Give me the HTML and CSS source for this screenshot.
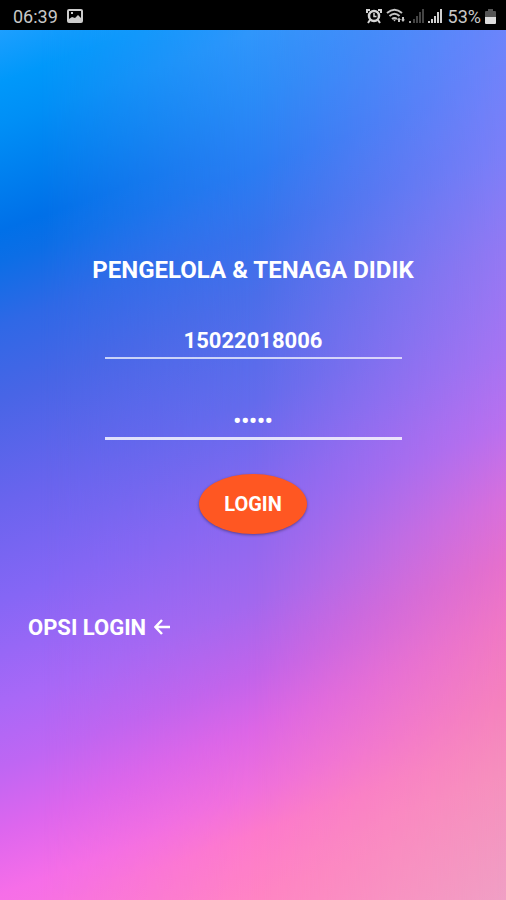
FILE: index.html
```html
<!DOCTYPE html>
<html lang="id">
<head>
<meta charset="utf-8">
<meta name="viewport" content="width=device-width, initial-scale=1">
<title>Login</title>
<link rel="stylesheet" href="styles.css">
</head>
<body>
<header class="statusbar">
	<span>06:39</span>
	<svg class="photo" width="16" height="14" viewBox="0 0 16 14"><path fill="#ccc" fill-rule="evenodd" d="M2 0h12a2 2 0 0 1 2 2v10a2 2 0 0 1-2 2H2a2 2 0 0 1-2-2V2a2 2 0 0 1 2-2zM2 2v8l3-2 3 1 3-3 3 3V2zM4 3h2v2H4z"/></svg>
	<div class="icons">
		<svg width="16" height="16" viewBox="0 0 16 16" fill="none" stroke="#d4d4d4" stroke-width="2.5"><circle cx="8" cy="8" r="5"/><path stroke-width="2" d="M1 5V2h3M15 5V2h-3M4 12l-2 3M12 12l2 3"/><path stroke-width="1.5" d="M8 5v3.500h2.500"/></svg>
		<svg width="19" height="16" viewBox="0 0 19 16" fill="none" stroke="#c4c4c4" stroke-width="2"><path d="M1 5q7.500-6.500 15 0M3.500 8q5-4.500 10 0M6 11q2.500-2 5 0"/><path fill="#c4c4c4" stroke="none" d="M7 11.500h3l-1.500 2zM13 9.500l2 2.500h-1v2h-2v-2h-1zM16 9h2v2.500h1L17 14l-2-2.500h1z"/></svg>
		<svg width="15" height="14" viewBox="0 0 15 14" fill="#444"><path fill="#999" d="M0 12h2v2H0z"/><path d="M4 10h2v4H4zM7 7h2v7H7zM10 3h2v11h-2zM13 0h2v14h-2z"/></svg>
		<svg width="14" height="14" viewBox="0 0 14 14" fill="#d0d0d0"><path d="M0 12h2v2H0zM3 10h2v4H3zM6 7h2v7H6zM9 3h2v11H9zM12 0h2v14h-2z"/></svg>
		<span class="percent">53%</span>
		<svg width="11" height="15" viewBox="0 0 11 15"><path fill="#555" d="M3 0h5v2h2a1 1 0 0 1 1 1v5H0V3a1 1 0 0 1 1-1h2z"/><path fill="#ddd" d="M0 8h11v6a1 1 0 0 1-1 1H1a1 1 0 0 1-1-1z"/></svg>
	</div>
</header>
<main class="screen">
	<form class="login" onsubmit="return false">
		<h1 class="title">PENGELOLA &amp; TENAGA DIDIK</h1>
		<input class="field" type="text" value="15022018006" aria-label="Username">
		<input class="field focused" type="password" value="12345" aria-label="Password">
		<button class="submit" type="submit">LOGIN</button>
	</form>
	<a class="back" href="#">OPSI LOGIN
		<svg width="16" height="20" viewBox="0 0 16 20" fill="none" stroke="#fff" stroke-width="2.5"><path d="M16 9H2M8 2L1.500 9L8 16"/></svg>
	</a>
</main>
</body>
</html>
```

FILE: styles.css
```css
* { box-sizing:border-box; }
body { margin:0; min-height:100vh; display:flex; flex-direction:column; background:#000; font-family:Roboto, sans-serif; color:#fff; }

.statusbar { display:flex; align-items:center; height:30px; padding:2px 10px 0 13px; font-size:18px; color:#c8c8c8; }
.photo { margin-left:9px; }
.icons { display:flex; align-items:center; gap:4px; margin-left:auto; }
.percent { margin-left:2px; }

/* three tilted ramps (left, middle, right) faded into each other */
.screen { position:relative; z-index:0; flex:1; padding:224px 28px 40px;
	background:linear-gradient(160deg, #1d9fff 0%, #0098fa 5%, #008ff6 9%, #0070e8 19%, #0c6ee6 22%, #2f68e6 28%, #4865e6 35%, #6a64ee 45%, #8566f5 54%, #a968f7 64%, #bf66f3 70%, #dd66ee 76%, #f66ee8 82%, #ff88c4 100%); }
.screen:before, .screen:after { content:""; position:absolute; z-index:-1; inset:0; }
.screen:before {
	background:linear-gradient(160deg, #1d9cff 0%, #3096fb 9%, #2a8cf7 15%, #2a7cf2 22%, #3872ec 28%, #4a6ee9 34%, #636bec 44%, #8568f0 53%, #a268ee 63%, #c264ea 70%, #dc66e6 75%, #f070dc 81%, #fd7acc 85%, #ff84c4 91%, #ff90c0 100%);
	mask-image:linear-gradient(to right, transparent 8%, #000 50%); }
.screen:after {
	background:linear-gradient(160deg, #4a90fa 0%, #6b85fb 17%, #7c7ff8 29%, #9379f3 38%, #a674f2 48%, #ba70ee 55%, #d86fdc 62%, #e670cc 68%, #f078c4 74%, #f582bd 81%, #f690bd 88%, #f09fc4 100%);
	mask-image:linear-gradient(to right, transparent 50%, #000); }

.login { display:flex; flex-direction:column; align-items:center; }
.title { margin:0; font-size:24px; line-height:32px; font-weight:bold; text-align:center; }
.field { width:66%; height:44px; margin-top:29px; padding:8px 0 0; border:0; border-bottom:2px solid rgba(255,255,255,.7); border-radius:0; outline:0; background:none; color:#fff; font:bold 22px Roboto, sans-serif; text-align:center; }
.focused { height:48px; margin-top:33px; padding-top:12px; border-bottom:3px solid rgba(255,255,255,.8); }
.submit { width:108px; height:60px; margin-top:34px; padding:0; border:0; border-radius:50%; background:#ff5722; color:#fff; font:bold 20px Roboto, sans-serif; box-shadow:0 1px 3px rgba(0,0,0,.4); }

.back { display:inline-flex; align-items:center; gap:8px; margin-top:80px; color:#fff; font-size:22px; line-height:28px; font-weight:bold; text-decoration:none; }
```
